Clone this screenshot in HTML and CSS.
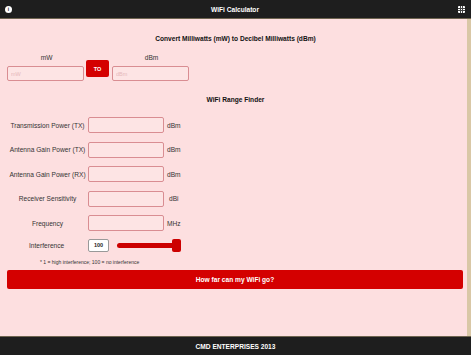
FILE: index.html
```html
<!DOCTYPE html>
<html lang="en">
<head>
    <meta charset="UTF-8">
    <meta name="viewport" content="width=device-width, initial-scale=1.0">
    <title>WiFi Calculator</title>
    <link rel="stylesheet" href="styles.css">
</head>
<body>
    <div class="app">
        <div class="top-bar">
            <span class="info-icon">i</span>
            <h1>WiFi Calculator</h1>
            <svg class="grid-icon" width="7" height="7" viewBox="0 0 7 7">
                <rect x="0" y="0" width="7" height="7" rx="1" fill="#fff"/>
                <rect x="2" y="0" width="1" height="7" fill="#444"/>
                <rect x="4" y="0" width="1" height="7" fill="#444"/>
                <rect x="0" y="2" width="7" height="1" fill="#444"/>
                <rect x="0" y="4" width="7" height="1" fill="#444"/>
            </svg>
        </div>

        <div class="content">
            <h2 class="section-title">Convert Milliwatts (mW) to Decibel Milliwatts (dBm)</h2>
            <div class="converter">
                <div class="conv-col">
                    <label>mW</label>
                    <input type="text" placeholder="mW">
                </div>
                <button class="to-btn">TO</button>
                <div class="conv-col">
                    <label>dBm</label>
                    <input type="text" placeholder="dBm">
                </div>
            </div>

            <h2 class="section-title range-title">WiFi Range Finder</h2>
            <div class="range-form">
                <div class="form-row">
                    <label>Transmission Power (TX)</label>
                    <input type="text">
                    <span class="unit">dBm</span>
                </div>
                <div class="form-row">
                    <label>Antenna Gain Power (TX)</label>
                    <input type="text">
                    <span class="unit">dBm</span>
                </div>
                <div class="form-row">
                    <label>Antenna Gain Power (RX)</label>
                    <input type="text">
                    <span class="unit">dBm</span>
                </div>
                <div class="form-row">
                    <label>Receiver Sensitivity</label>
                    <input type="text">
                    <span class="unit unit-dbi">dBi</span>
                </div>
                <div class="form-row">
                    <label>Frequency</label>
                    <input type="text">
                    <span class="unit">MHz</span>
                </div>
                <div class="form-row slider-row">
                    <label>Interference</label>
                    <span class="slider-value">100</span>
                    <div class="slider">
                        <div class="slider-track"></div>
                        <div class="slider-thumb"></div>
                    </div>
                </div>
                <p class="note">* 1 = high interference; 100 = no interference</p>
            </div>

            <button class="go-btn">How far can my WiFi go?</button>
        </div>

        <div class="footer">CMD ENTERPRISES 2013</div>
    </div>
</body>
</html>
```

FILE: styles.css
```css
* {
    box-sizing: border-box;
}

body {
    margin: 0;
    font-family: "Liberation Sans", Arial, sans-serif;
    background-color: #1e1e1e;
}

.app {
    display: flex;
    flex-direction: column;
    height: 355px;
    width: 471px;
}

.top-bar {
    height: 19px;
    display: flex;
    align-items: center;
    justify-content: space-between;
    padding: 0 6px 0 5px;
    background-color: #1e1e1e;
    border-bottom: 1px solid #6e6450;
}

.top-bar h1 {
    margin: 0;
    font-size: 6.6px;
    font-weight: bold;
    color: #fff;
}

.info-icon {
    width: 7px;
    height: 7px;
    border-radius: 50%;
    background: #fff;
    color: #222;
    font-size: 5px;
    font-weight: bold;
    line-height: 7px;
    text-align: center;
}

.grid-icon {
    display: block;
}

.content {
    flex: 1;
    background-color: #fddfe0;
    border-right: 4px solid #d9c7a6;
    padding: 15px 3px 0 7px;
}

.section-title {
    margin: 0;
    font-size: 6.6px;
    font-weight: bold;
    color: #111;
    text-align: center;
    line-height: 9px;
}

.converter {
    display: flex;
    align-items: flex-start;
    margin-top: 10px;
}

.conv-col {
    display: flex;
    flex-direction: column;
    align-items: center;
    width: 77px;
}

.conv-col label {
    font-size: 6.6px;
    color: #333;
    line-height: 10px;
    padding-left: 2px;
}

.conv-col input {
    margin-top: 3px;
}

input {
    width: 77px;
    height: 15px;
    border: 1px solid #d98d92;
    border-radius: 2px;
    background-color: #fde4e4;
    font-family: inherit;
    font-size: 5.5px;
    padding: 0 3px;
    outline: none;
}

input::placeholder {
    color: #e6b8ba;
}

.to-btn {
    width: 23px;
    height: 17px;
    margin: 7px 3px 0 2px;
    border: none;
    border-radius: 2px;
    background-color: #d40000;
    color: #fff;
    font-family: inherit;
    font-size: 5.5px;
    font-weight: bold;
    padding: 0;
}

.range-title {
    margin-top: 14px;
}

.range-form {
    margin-top: 13px;
    display: flex;
    flex-direction: column;
    gap: 8.5px;
}

.form-row {
    display: flex;
    align-items: center;
}

.form-row label {
    width: 81px;
    text-align: center;
    font-size: 6.6px;
    color: #333;
}

.form-row input {
    width: 76px;
    height: 16px;
}

.unit {
    margin-left: 3px;
    font-size: 6.6px;
    color: #333;
}

.unit-dbi {
    margin-left: 5px;
}

.slider-row {
    margin-top: -1px;
}

.slider-row label {
    text-align: left;
    padding-left: 22px;
}

.slider-value {
    width: 21px;
    height: 13px;
    border: 1px solid #999;
    border-radius: 2px;
    background: #fff;
    font-size: 5.5px;
    font-weight: bold;
    color: #222;
    display: flex;
    align-items: center;
    justify-content: center;
}

.slider {
    position: relative;
    width: 64px;
    height: 13px;
    margin-left: 8px;
    display: flex;
    align-items: center;
}

.slider-track {
    width: 58px;
    height: 5px;
    border-radius: 3px;
    background-color: #cc0000;
}

.slider-thumb {
    position: absolute;
    right: 0;
    top: 0;
    width: 9px;
    height: 13px;
    border-radius: 2px;
    background-color: #cc0000;
}

.note {
    margin: -1px 0 0 33px;
    font-size: 5px;
    color: #333;
}

.go-btn {
    display: block;
    width: 456px;
    height: 19px;
    margin-top: 5px;
    border: none;
    border-radius: 2px;
    background-color: #d40000;
    color: #fff;
    font-family: inherit;
    font-size: 6.6px;
    font-weight: bold;
}

.footer {
    height: 19px;
    display: flex;
    align-items: center;
    justify-content: center;
    background-color: #1e1e1e;
    border-top: 1px solid #6e6450;
    color: #fff;
    font-size: 6.6px;
    font-weight: bold;
}
```
